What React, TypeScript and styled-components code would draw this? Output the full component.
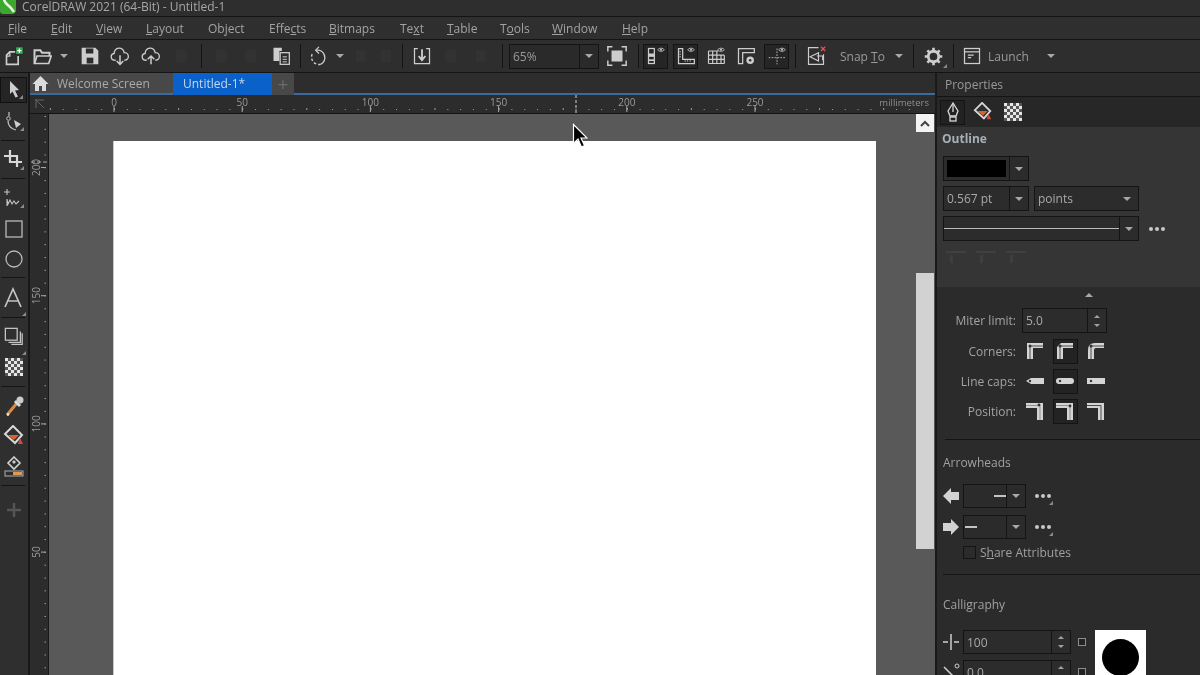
import React from "react";
import styled, { createGlobalStyle } from "styled-components";

const GlobalStyle = createGlobalStyle`
  html, body { margin: 0; padding: 0; background: #2d2d2d; overflow: hidden; }
  * { box-sizing: border-box; }
`;

const Screen = styled.div`
  position: relative;
  width: 1200px;
  height: 675px;
  overflow: hidden;
  display: flex;
  flex-direction: column;
  background: #2d2d2d;
  color: #a9a9a9;
  font-family: "Open Sans", "Noto Sans", sans-serif;
  font-size: 12px;
  filter: blur(0.6px);
`;

const TitleBar = styled.div`
  height: 17px;
  flex: none;
  display: flex;
  align-items: flex-start;
  gap: 6px;
  background: #2e2e2e;
  border-bottom: 1px solid #141414;
`;

const TitleText = styled.span`
  font-size: 12px;
  line-height: 13px;
  color: #a6a6a6;
`;

const MenuBar = styled.div`
  height: 23px;
  flex: none;
  display: flex;
  align-items: center;
  padding-left: 8px;
  background: #2f2f2f;
  border-bottom: 1px solid #141414;
`;

const MenuItem = styled.span<{ $w: number }>`
  width: ${(p) => p.$w}px;
  color: #a3a3a3;
  font-size: 12px;
  white-space: nowrap;
`;

const Toolbar = styled.div`
  height: 33px;
  flex: none;
  display: flex;
  align-items: center;
  background: #2e2e2e;
  border-bottom: 1px solid #141414;
`;

const Tool = styled.div<{ $w?: number; $boxed?: boolean }>`
  position: relative;
  width: ${(p) => p.$w ?? 30}px;
  height: 25px;
  flex: none;
  display: flex;
  align-items: center;
  justify-content: center;
  color: #cdcdcd;
  ${(p) => (p.$boxed ? "border: 1px solid #141414; background: #252525;" : "")}
`;

const Spacer = styled.div<{ $w: number }>`
  width: ${(p) => p.$w}px;
  flex: none;
`;

const ToolSep = styled.div<{ $w: number }>`
  width: ${(p) => p.$w}px;
  height: 24px;
  flex: none;
  display: flex;
  justify-content: center;
  &::before {
    content: "";
    width: 1px;
    background: #141414;
  }
`;

const Caret = styled.div<{ $w?: number }>`
  width: ${(p) => p.$w ?? 16}px;
  flex: none;
  display: flex;
  justify-content: center;
  &::before {
    content: "";
    border-left: 4px solid transparent;
    border-right: 4px solid transparent;
    border-top: 4px solid #a8a8a8;
  }
`;

const CornerTick = styled.span`
  position: absolute;
  right: 1px;
  bottom: 1px;
  border-left: 4px solid transparent;
  border-bottom: 4px solid #8c8c8c;
`;

const ToolLabel = styled.span<{ $w: number }>`
  width: ${(p) => p.$w}px;
  flex: none;
  color: #9a9a9a;
  font-size: 12px;
  white-space: nowrap;
`;

const ZoomCombo = styled.div`
  width: 90px;
  height: 25px;
  flex: none;
  margin-left: 1px;
  display: flex;
  align-items: center;
  border: 1px solid #141414;
  background: #2a2a2a;
  color: #9a9a9a;
  font-size: 12px;
`;

const ComboValue = styled.span`
  flex: 1;
  padding-left: 3px;
`;

const ComboArrow = styled.div<{ $w?: number }>`
  width: ${(p) => p.$w ?? 19}px;
  align-self: stretch;
  flex: none;
  display: flex;
  align-items: center;
  justify-content: center;
  border-left: 1px solid #141414;
  &::before {
    content: "";
    border-left: 4px solid transparent;
    border-right: 4px solid transparent;
    border-top: 4px solid #a8a8a8;
  }
`;

const Main = styled.div`
  flex: 1;
  min-height: 0;
  display: flex;
`;

const Toolbox = styled.div`
  width: 30px;
  flex: none;
  display: flex;
  flex-direction: column;
  align-items: flex-start;
  padding-top: 4px;
  background: #2f2f2f;
  border-right: 2px solid #181818;
`;

const BoxTool = styled.div<{ $h: number; $boxed?: boolean }>`
  position: relative;
  width: 27px;
  height: ${(p) => p.$h}px;
  flex: none;
  display: flex;
  align-items: center;
  justify-content: center;
  color: #b9b9b9;
  ${(p) => (p.$boxed ? "border: 1px solid #111; background: #252525;" : "")}
`;

const BoxSep = styled.div`
  width: 24px;
  height: 1px;
  flex: none;
  margin-left: 1px;
  background: #141414;
`;

const Center = styled.div`
  flex: 1;
  min-width: 0;
  display: flex;
  flex-direction: column;
`;

const TabStrip = styled.div`
  height: 22px;
  flex: none;
  display: flex;
  background: #2d2d2d;
`;

const Tab = styled.div<{ $w: number; $active?: boolean }>`
  width: ${(p) => p.$w}px;
  display: flex;
  align-items: center;
  gap: 8px;
  padding-left: ${(p) => (p.$active ? 10 : 2)}px;
  font-size: 12px;
  background: ${(p) => (p.$active ? "#0a61c9" : "#484848")};
  color: ${(p) => (p.$active ? "#c5d7ee" : "#aaaaaa")};
  border-bottom: 2px solid ${(p) => (p.$active ? "#0a61c9" : "#3d6a9c")};
`;

const AddTab = styled.div`
  width: 22px;
  display: flex;
  align-items: center;
  justify-content: center;
  background: #484848;
  color: #6c6c6c;
  font-size: 19px;
  line-height: 1;
`;

const TabRest = styled.div`
  flex: 1;
  border-bottom: 2px solid #3d6a9c;
`;

const RulerRow = styled.div`
  height: 19px;
  flex: none;
  display: flex;
  background: #2c2c2c;
  border-bottom: 1px solid #141414;
`;

const RulerCorner = styled.div`
  width: 19px;
  flex: none;
  display: flex;
  align-items: center;
  justify-content: center;
  color: #666;
`;

const WorkRow = styled.div`
  flex: 1;
  min-height: 0;
  display: flex;
`;

const VerticalRuler = styled.div`
  width: 19px;
  flex: none;
  background: #2c2c2c;
  border-right: 1px solid #181818;
`;

const Canvas = styled.div`
  flex: 1;
  min-width: 0;
  display: flex;
  background: #595959;
`;

const PageArea = styled.div`
  flex: 1;
  padding: 27px 40px 0 64px;
`;

const Page = styled.div`
  height: 100%;
  background: #ffffff;
  border-left: 1px solid #c8c8c8;
`;

const ScrollBar = styled.div`
  width: 18px;
  flex: none;
  margin-right: 1px;
  display: flex;
  flex-direction: column;
`;

const ScrollUp = styled.div`
  height: 18px;
  display: flex;
  align-items: center;
  justify-content: center;
  background: #f4f4f4;
  color: #444;
`;

const ScrollThumb = styled.div`
  height: 276px;
  margin-top: 141px;
  background: #d2d2d2;
`;

const Panel = styled.div`
  width: 265px;
  flex: none;
  display: flex;
  flex-direction: column;
  background: #2b2b2b;
  border-left: 2px solid #1a1a1a;
  color: #a3a3a3;
  font-size: 12px;
`;

const PanelHeader = styled.div`
  height: 24px;
  flex: none;
  display: flex;
  align-items: center;
  padding-left: 8px;
  border-bottom: 1px solid #141414;
  color: #999;
`;

const PanelTabs = styled.div`
  height: 30px;
  flex: none;
  display: flex;
  align-items: center;
  padding-left: 3px;
  background: #272727;
`;

const PanelTab = styled.div<{ $w: number; $boxed?: boolean }>`
  width: ${(p) => p.$w}px;
  height: 25px;
  flex: none;
  display: flex;
  align-items: center;
  justify-content: center;
  color: #d8d8d8;
  ${(p) => (p.$boxed ? "border: 1px solid #151515; background: #222;" : "")}
`;

const OutlineSection = styled.div`
  height: 160px;
  flex: none;
  display: flex;
  flex-direction: column;
  gap: 5px;
  padding: 3px 0 0 6px;
  background: #353535;
`;

const SectionTitle = styled.div`
  height: 17px;
  margin: 0 0 4px -1px;
  font-weight: 700;
  color: #a6b0b8;
`;

const FieldRow = styled.div`
  display: flex;
  align-items: center;
  gap: 5px;
`;

const Field = styled.div<{ $w: number; $h?: number }>`
  width: ${(p) => p.$w}px;
  height: ${(p) => p.$h ?? 25}px;
  flex: none;
  display: flex;
  align-items: center;
  border: 1px solid #141414;
  background: #2c2c2c;
  color: #a8a8a8;
  font-size: 12px;
`;

const FieldValue = styled.div`
  flex: 1;
  min-width: 0;
  padding-left: 3px;
`;

const Swatch = styled.div`
  flex: 1;
  align-self: stretch;
  margin: 3px;
  background: #000;
`;

const SwatchHolder = styled.div`
  flex: 1;
  align-self: stretch;
  display: flex;
`;

const LinePreview = styled.div`
  flex: 1;
  height: 1px;
  background: #b9b9b9;
`;

const Dots = styled.div<{ $corner?: boolean; $ml: number }>`
  position: relative;
  margin-left: ${(p) => p.$ml}px;
  display: flex;
  &::before {
    content: "";
    width: 4px;
    height: 4px;
    border-radius: 50%;
    background: #c8c8c8;
    box-shadow: 6px 0 0 #c8c8c8, 12px 0 0 #c8c8c8;
  }
  ${(p) =>
    p.$corner
      ? `&::after {
    content: "";
    position: absolute;
    left: 14px;
    top: 7px;
    border-left: 4px solid transparent;
    border-bottom: 4px solid #8a8a8a;
  }`
      : ""}
`;

const GhostRow = styled.div`
  display: flex;
  gap: 10px;
  padding: 5px 0 0 3px;
`;

const Ghost = styled.div`
  width: 20px;
  height: 14px;
  border-top: 2px solid #404040;
  &::after {
    content: "";
    display: block;
    width: 3px;
    height: 8px;
    margin: 2px 0 0 4px;
    background: #3e3e3e;
  }
`;

const StyleBlock = styled.div`
  height: 153px;
  flex: none;
  margin-left: 8px;
  padding-top: 6px;
  border-bottom: 1px solid #141414;
`;

const Triangle = styled.div`
  width: 0;
  margin-left: 140px;
  margin-bottom: 8px;
  border-left: 4px solid transparent;
  border-right: 4px solid transparent;
  border-bottom: 4px solid #a8a8a8;
`;

const PropRow = styled.div<{ $h?: number }>`
  height: ${(p) => p.$h ?? 30}px;
  display: flex;
  align-items: center;
`;

const PropLabel = styled.div`
  width: 71px;
  text-align: right;
  margin-right: 6px;
  color: #a2a2a2;
  white-space: nowrap;
`;

const Choice = styled.div<{ $boxed?: boolean }>`
  width: 25px;
  height: 25px;
  margin-right: 5.5px;
  display: flex;
  align-items: center;
  justify-content: center;
  color: #d2d2d2;
  ${(p) => (p.$boxed ? "border: 1px solid #141414; background: #232323;" : "")}
`;

const Spin = styled.div`
  width: 19px;
  align-self: stretch;
  flex: none;
  display: flex;
  flex-direction: column;
  align-items: center;
  justify-content: center;
  gap: 6px;
  border-left: 1px solid #141414;
  &::before {
    content: "";
    border-left: 3px solid transparent;
    border-right: 3px solid transparent;
    border-bottom: 3px solid #a0a0a0;
  }
  &::after {
    content: "";
    border-left: 3px solid transparent;
    border-right: 3px solid transparent;
    border-top: 3px solid #a0a0a0;
  }
`;

const GroupBlock = styled.div`
  flex: none;
  margin-left: 6px;
  border-bottom: 1px solid #141414;
  padding-top: 14px;
  height: 135px;
`;

const GroupTitle = styled.div`
  height: 17px;
  color: #a0a0a0;
`;

const ArrowRow = styled.div<{ $mt: number }>`
  display: flex;
  align-items: center;
  height: 24px;
  margin-top: ${(p) => p.$mt}px;
  color: #d2d2d2;
`;

const ArrowIcon = styled.div`
  width: 20px;
  flex: none;
  display: flex;
`;

const ArrowField = styled(Field)`
  justify-content: flex-start;
  background: #2b2b2b;
`;

const EndBar = styled.div<{ $right?: boolean }>`
  width: 12px;
  height: 2px;
  margin: ${(p) => (p.$right ? "0 0 0 auto" : "0 auto 0 1px")};
  background: #c4c4c4;
`;

const CheckRow = styled.div`
  display: flex;
  align-items: center;
  gap: 4px;
  margin: 5px 0 0 20px;
  color: #a0a0a0;
`;

const CheckBox = styled.div`
  width: 13px;
  height: 13px;
  border: 1px solid #141414;
  background: #2b2b2b;
`;

const CalligraphyBlock = styled.div`
  margin-left: 6px;
  padding-top: 21px;
`;

const CalligraphyBody = styled.div`
  display: flex;
  margin-top: 17px;
`;

const CalligraphyFields = styled.div`
  display: flex;
  flex-direction: column;
  gap: 6px;
`;

const SmallSquare = styled.div`
  width: 8px;
  height: 8px;
  margin-left: 7px;
  border: 1px solid #8d8d8d;
  background: #222;
`;

const Nib = styled.div`
  width: 51px;
  height: 54px;
  margin-left: 9px;
  display: flex;
  align-items: center;
  justify-content: center;
  background: #fff;
`;

const NibDot = styled.div`
  width: 37px;
  height: 37px;
  border-radius: 50%;
  background: #000;
`;

const MouseCursor = styled.svg`
  position: absolute;
  left: 572px;
  top: 123px;
`;

type IconProps = { size?: number; children: React.ReactNode };

const Icon = ({ size = 20, children }: IconProps) => (
  <svg width={size} height={size} viewBox="0 0 24 24" fill="none" stroke="currentColor" strokeWidth="2">
    {children}
  </svg>
);

const Logo = () => (
  <svg width="16" height="14" viewBox="0 0 16 14">
    <path d="M0 0h16v10q0 4-4 4H3q-3 0-3-3z" fill="#3da82f" />
    <path d="M4 -1C4 3 8 5 11 8l3 4" stroke="#e8f6df" strokeWidth="2.600" fill="none" />
  </svg>
);

const NewIcon = () => (
  <Icon>
    <path d="M15 7H7L3 11v11h14V12" />
    <path d="M7 7v5H3" strokeWidth="1.5" />
    <rect x="14" y="1" width="9" height="9" fill="#35a853" stroke="#222" strokeWidth="1" />
    <path d="M18.500 3v5M16 5.500h5" stroke="#fff" strokeWidth="1.500" />
  </Icon>
);

const OpenIcon = () => (
  <Icon>
    <path d="M3 21V5h7l2 3h9v4" strokeWidth="2.400" />
    <path d="M3 21l3-9h17l-3 9z" />
  </Icon>
);

const SaveIcon = () => (
  <Icon>
    <path d="M3 3h15l3 3v15H3z" fill="currentColor" />
    <rect x="7" y="3" width="9" height="6" fill="#2e2e2e" stroke="none" />
    <rect x="8" y="14" width="8" height="7" fill="#2e2e2e" stroke="none" />
  </Icon>
);

const CloudIcon = ({ up }: { up?: boolean }) => (
  <Icon>
    <path d="M7 17H6a4 4 0 0 1-1-8 6 6 0 0 1 12-1 4.500 4.500 0 0 1 1 9h-1" strokeWidth="1.600" />
    {up ? <path d="M12 22V12m-4 4l4-4 4 4" strokeWidth="1.800" /> : <path d="M12 11v11m-4-4l4 4 4-4" strokeWidth="1.800" />}
  </Icon>
);

const DimIcon = () => (
  <svg width="20" height="20" viewBox="0 0 20 20">
    <rect x="5" y="4" width="10" height="12" fill="#323232" />
  </svg>
);

const PasteIcon = () => (
  <Icon>
    <path d="M3 2h10v4h-3v12H3z" fill="currentColor" stroke="none" />
    <rect x="11" y="8" width="11" height="14" fill="#2e2e2e" strokeWidth="1.500" />
    <path d="M14 13h5M14 16h5M14 19h5" strokeWidth="1.200" />
  </Icon>
);

const UndoIcon = () => (
  <Icon>
    <path d="M9 5a9 9 0 0 1 5 17" strokeWidth="1.700" />
    <path d="M14 22a9 9 0 0 1-11-9 9 9 0 0 1 2-5" strokeWidth="1.700" strokeDasharray="3 2.500" />
    <path d="M12 1L8 5l4 4" strokeWidth="1.500" />
  </Icon>
);

const ImportIcon = () => (
  <Icon>
    <path d="M7 3H3v18h18V3h-4" strokeWidth="1.500" />
    <path d="M12 4v12m-4-4l4 5 4-5" strokeWidth="2.200" />
  </Icon>
);

const FitIcon = () => (
  <Icon size={22}>
    <rect x="6" y="6" width="12" height="12" fill="currentColor" stroke="none" />
    <path d="M2 7V2h5M17 2h5v5M22 17v5h-5M7 22H2v-5" strokeWidth="1.600" />
  </Icon>
);

const EyeMark = () => (
  <>
    <path d="M14 4.500c2-2.500 6-2.500 8 0-2 2.500-6 2.500-8 0z" strokeWidth="1" />
    <circle cx="18" cy="4.500" r="1.200" fill="currentColor" stroke="none" />
  </>
);

const PagesEye = () => (
  <Icon>
    <rect x="3" y="3" width="7" height="18" strokeWidth="1.500" />
    <rect x="3" y="9" width="7" height="4" fill="currentColor" stroke="none" />
    <rect x="3" y="16" width="7" height="2" fill="currentColor" stroke="none" />
    <EyeMark />
  </Icon>
);

const RulerEye = () => (
  <Icon>
    <path d="M3 3h5v13h14v5H3z" strokeWidth="1.500" />
    <path d="M11 17v2M14 17v2M17 17v2M4 7h2M4 10h2M4 13h2" strokeWidth="1" />
    <EyeMark />
  </Icon>
);

const GridEye = () => (
  <Icon>
    <path d="M3 6h12M3 11h19M3 16h19M3 21h19M3 6v15M8 6v15M13 6v15M18 11v10M22 11v10" strokeWidth="1.400" />
    <EyeMark />
  </Icon>
);

const GuideSet = () => (
  <Icon>
    <path d="M3 3h19v5H8v13H3z" strokeWidth="1.500" />
    <circle cx="17" cy="17" r="4.500" fill="currentColor" stroke="none" />
    <circle cx="17" cy="17" r="1.500" fill="#2e2e2e" stroke="none" />
  </Icon>
);

const GuideEye = () => (
  <Icon>
    <path d="M12 3v19M2 14h20" strokeWidth="1" strokeDasharray="2 1.500" />
    <EyeMark />
  </Icon>
);

const SnapOff = () => (
  <Icon>
    <path d="M15 2H3v20h18V10" strokeWidth="1.400" />
    <path d="M15 8l-10 5 10 5z" strokeWidth="1.400" />
    <path d="M13 12h7v5" strokeWidth="1.400" />
    <path d="M18 1l5 5M23 1l-5 5" stroke="#e0524f" strokeWidth="1.600" />
  </Icon>
);

const GearIcon = () => (
  <Icon size={21}>
    <circle cx="12" cy="12" r="6" strokeWidth="3.200" />
    <path d="M12 2v4M12 18v4M2 12h4M18 12h4M5 5l3 3M16 16l3 3M19 5l-3 3M8 16l-3 3" strokeWidth="3" />
  </Icon>
);

const LaunchIcon = () => (
  <Icon>
    <rect x="3" y="3" width="18" height="18" strokeWidth="1.500" />
    <path d="M3 7h18" strokeWidth="1.500" />
    <path d="M7 11h7M7 14h4" strokeWidth="1.500" />
  </Icon>
);

const PickIcon = () => (
  <svg width="20" height="20" viewBox="0 0 20 20">
    <path d="M6 1l9 9-4 .5 3 6-2.500 1-3-6L6 14z" fill="#cfcfcf" />
    <path d="M19 15v4h-4z" fill="#8c8c8c" />
  </svg>
);

const ShapeIcon = () => (
  <svg width="22" height="24" viewBox="0 0 22 24" fill="none" stroke="#c4c4c4">
    <path d="M6 2v4M5 11c0 5 4 8 8 9" strokeWidth="1.200" />
    <circle cx="5.500" cy="8.500" r="1.800" />
    <path d="M11 10l7 4-5 4z" fill="#cfcfcf" stroke="none" />
    <path d="M21 17v4h-4z" fill="#8c8c8c" stroke="none" />
  </svg>
);

const CropIcon = () => (
  <svg width="22" height="22" viewBox="0 0 22 22" fill="none" stroke="#d8d8d8" strokeWidth="2.200">
    <path d="M1 7h13v11M7 1v12h12" />
    <path d="M21 17v4h-4z" fill="#8c8c8c" stroke="none" />
  </svg>
);

const CurveIcon = () => (
  <svg width="22" height="22" viewBox="0 0 22 22" fill="none" stroke="#c4c4c4" strokeWidth="1.100">
    <path d="M4 2v6M1 5h6" />
    <path d="M4 19v-7l1 5 2-4 2 4 2-3 2 3 3-3" />
    <path d="M21 17v4h-4z" fill="#8c8c8c" stroke="none" />
  </svg>
);

const RectIcon = () => (
  <svg width="18" height="18" viewBox="0 0 18 18" fill="none" stroke="currentColor" strokeWidth="1.300">
    <rect x="1" y="1" width="16" height="16" />
  </svg>
);

const EllipseIcon = () => (
  <svg width="18" height="18" viewBox="0 0 18 18" fill="none" stroke="currentColor" strokeWidth="1.300">
    <circle cx="9" cy="9" r="8" />
  </svg>
);

const TextToolIcon = () => (
  <svg width="20" height="22" viewBox="0 0 20 22" fill="none" stroke="#c4c4c4" strokeWidth="1.700">
    <path d="M1 20L9 2l8 18M4.500 14h9" />
  </svg>
);

const ShadowIcon = () => (
  <svg width="20" height="20" viewBox="0 0 22 22" fill="none" stroke="#c4c4c4" strokeWidth="1.400">
    <rect x="1.500" y="1.500" width="13" height="13" />
    <path d="M18 5v12H5M20 7v12H8" />
  </svg>
);

const Checker = ({ size = 18 }: { size?: number }) => {
  const cells = [];
  for (let r = 0; r < 6; r++) {
    for (let c = 0; c < 6; c++) {
      if ((r + c) % 2 === 0) cells.push(<rect key={`${r}-${c}`} x={c * 3} y={r * 3} width="3" height="3" fill="#e6e6e6" />);
    }
  }
  return (
    <svg width={size} height={size} viewBox="0 0 18 18">
      <rect width="18" height="18" fill="#555" />
      {cells}
    </svg>
  );
};

const DropperIcon = () => (
  <svg width="20" height="22" viewBox="0 0 20 22" fill="none">
    <path d="M3 20L13 8" stroke="#d88b45" strokeWidth="3" />
    <path d="M3 20l2-1" stroke="#eee" strokeWidth="2" />
    <path d="M11 6l5 5" stroke="#ddd" strokeWidth="3" />
    <circle cx="16" cy="5" r="3.500" fill="#ccc" />
  </svg>
);

const FillIcon = ({ small }: { small?: boolean }) => (
  <svg width={small ? 20 : 22} height={small ? 20 : 22} viewBox="0 0 22 22">
    <path d="M10 1l9 9-7 8-10-9z" fill="#2e2e2e" stroke="#d8d8d8" strokeWidth="2" />
    <path d="M5 10h11l-5 5z" fill="#d8642b" />
    <path d="M17 13l3 6h-5z" fill="#d24a3c" />
  </svg>
);

const InteractiveIcon = () => (
  <svg width="22" height="22" viewBox="0 0 22 22">
    <path d="M11 1l6 6-6 6-6-6z" fill="#2e2e2e" stroke="#d0d0d0" strokeWidth="1.600" />
    <path d="M9 6l2-2 2 2-2 2z" fill="#c8c8c8" />
    <rect x="2" y="15" width="18" height="5" fill="#2e2e2e" stroke="#b0b0b0" />
    <rect x="10" y="16" width="9" height="3" fill="#e09a50" />
  </svg>
);

const ExtIcon = () => (
  <svg width="14" height="14" viewBox="0 0 14 14" stroke="#555" strokeWidth="2.500">
    <path d="M7 0v14M0 7h14" />
  </svg>
);

const HomeIcon = () => (
  <svg width="17" height="17" viewBox="0 0 17 17">
    <path d="M8.500 1L0.500 9h2.500v7h4v-5h3v5h4V9h2.500z" fill="#dcdcdc" />
  </svg>
);

const CornerMark = () => (
  <svg width="12" height="12" viewBox="0 0 12 12" fill="none" stroke="currentColor">
    <path d="M1 2h9M2 1v9M3 3l7 7" />
  </svg>
);

const UpChevron = () => (
  <svg width="10" height="7" viewBox="0 0 10 7" fill="none" stroke="currentColor" strokeWidth="2">
    <path d="M1 6l4-4 4 4" />
  </svg>
);

const PenIcon = () => (
  <svg width="14" height="20" viewBox="0 0 14 20" fill="none" stroke="#d8d8d8" strokeWidth="1.300">
    <path d="M7 1L2 9l2 5h6l2-5z" />
    <path d="M7 2v8" />
    <rect x="4" y="15" width="6" height="4" />
  </svg>
);

const CornerIcon = ({ kind }: { kind: number }) => {
  const outer = kind === 2 ? "M1 17V8Q1 1 8 1h9v5H9Q7 6 7 8v9z" : kind === 1 ? "M1 17V5L5 1h12v5H7v11z" : "M1 17V1h16v5H7v11z";
  return (
    <svg width="18" height="18" viewBox="0 0 18 18">
      <path d={outer} fill="#d4d4d4" />
      <path d="M4 17V5Q4 4 5 4h12" fill="none" stroke="#2b2b2b" strokeWidth="0.800" />
      <circle cx="4" cy="4" r="1.500" fill="#333" />
    </svg>
  );
};

const CapIcon = ({ kind }: { kind: number }) => (
  <svg width="18" height="8" viewBox="0 0 18 8">
    {kind === 0 && <path d="M0 4L5 1h13v6H5z" fill="#d4d4d4" />}
    {kind === 1 && <rect x="0" y="1" width="18" height="6" fill="#d4d4d4" rx="3" />}
    {kind === 2 && <rect x="0" y="1" width="18" height="6" fill="#d4d4d4" />}
    <circle cx="4" cy="4" r="1.200" fill="#333" />
  </svg>
);

const PositionIcon = ({ kind }: { kind: number }) => (
  <svg width="18" height="18" viewBox="0 0 18 18">
    <path d="M0 1h17v17h-6V6H0z" fill="#d4d4d4" />
    <path d="M0 3.500h14V18" fill="none" stroke="#2b2b2b" strokeWidth={kind === 2 ? 0.800 : 0.400} />
    {kind < 2 && <circle cx={kind === 0 ? 13 : 14} cy={kind === 0 ? 3 : 4} r="1.400" fill="#333" />}
  </svg>
);

const BigArrow = ({ left }: { left?: boolean }) => (
  <svg width="16" height="16" viewBox="0 0 16 16">
    <path d={left ? "M16 4H8V0L0 8l8 8v-4h8z" : "M0 4h8V0l8 8-8 8v-4H0z"} fill="#d2d2d2" />
  </svg>
);

const WidthIcon = () => (
  <svg width="16" height="18" viewBox="0 0 16 18" stroke="#cfcfcf" fill="none">
    <path d="M8 1v16" strokeWidth="1.500" />
    <path d="M0 9h5M11 9h5" strokeWidth="1.500" />
  </svg>
);

const AngleIcon = () => (
  <svg width="18" height="18" viewBox="0 0 18 18" stroke="#cfcfcf" fill="none" strokeWidth="1.500">
    <path d="M1 4l10 10" />
    <circle cx="14" cy="3" r="2" strokeWidth="1" />
  </svg>
);

// mm ticks along the rulers, 5mm = 12.82px
const STEP = 12.82;

const HorizontalRuler = () => {
  const labels = [0, 50, 100, 150, 200, 250];
  const ticks = [];
  for (let i = -6; i < 63; i++) ticks.push(65 + i * STEP);
  return (
    <svg width="886" height="18" viewBox="0 0 886 18">
      {ticks.map((x, i) => (
        <rect key={i} x={x} y={i % 5 === 1 ? 13 : 14} width="1" height={i % 5 === 1 ? 2 : 1} fill="#a0a0a0" />
      ))}
      {labels.map((l) => {
        const x = 65 + l * (STEP / 5);
        return (
          <g key={l}>
            <text x={x} y="10.500" textAnchor="middle" fontSize="10" fontFamily="Open Sans" fill="#9a9a9a">
              {l}
            </text>
            <rect x={x - 0.5} y="11" width="1" height="6" fill="#a8a8a8" />
          </g>
        );
      })}
      <text x="880" y="10.500" textAnchor="end" fontSize="9.500" fontFamily="Open Sans" fill="#8e8e8e">
        millimeters
      </text>
      <path d="M527 0v18" stroke="#cfcfcf" strokeDasharray="3 2" />
    </svg>
  );
};

const VerticalRulerMarks = () => {
  const labels = [200, 150, 100, 50];
  const ticks = [];
  for (let i = 0; i < 46; i++) ticks.push(2 + i * STEP);
  return (
    <svg width="18" height="562" viewBox="0 0 18 562">
      {ticks.map((y, i) => (
        <rect key={i} x="14.500" y={y} width="1.500" height="1" fill="#9a9a9a" />
      ))}
      {labels.map((l, i) => {
        const y = 53.500 + i * STEP * 10;
        return (
          <g key={l}>
            <text
              x="0"
              y="0"
              textAnchor="middle"
              fontSize="10"
              fontFamily="Open Sans"
              fill="#9a9a9a"
              transform={`translate(10 ${y}) rotate(-90)`}
            >
              {l}
            </text>
            <rect x="11" y={y - 0.5} width="5" height="1" fill="#a8a8a8" />
          </g>
        );
      })}
      <path d="M1 48h17" stroke="#a8a8a8" strokeDasharray="4 2" />
    </svg>
  );
};

const App = () => {
  return (
    <>
      <GlobalStyle />
      <Screen>
        <TitleBar>
          <Logo />
          <TitleText>CorelDRAW 2021 (64-Bit) - Untitled-1</TitleText>
        </TitleBar>

        <MenuBar>
          <MenuItem $w={43}><u>F</u>ile</MenuItem>
          <MenuItem $w={45}><u>E</u>dit</MenuItem>
          <MenuItem $w={50}><u>V</u>iew</MenuItem>
          <MenuItem $w={62}><u>L</u>ayout</MenuItem>
          <MenuItem $w={61}>Ob<u>j</u>ect</MenuItem>
          <MenuItem $w={60}>Effe<u>c</u>ts</MenuItem>
          <MenuItem $w={71}><u>B</u>itmaps</MenuItem>
          <MenuItem $w={47}>Te<u>x</u>t</MenuItem>
          <MenuItem $w={53}><u>T</u>able</MenuItem>
          <MenuItem $w={52}>T<u>o</u>ols</MenuItem>
          <MenuItem $w={70}><u>W</u>indow</MenuItem>
          <MenuItem $w={40}><u>H</u>elp</MenuItem>
        </MenuBar>

        <Toolbar>
          <Tool $w={28}><NewIcon /></Tool>
          <Tool $w={28}><OpenIcon /></Tool>
          <Caret />
          <Spacer $w={3} />
          <Tool><SaveIcon /></Tool>
          <Tool><CloudIcon /></Tool>
          <Tool $w={31}><CloudIcon up /></Tool>
          <Tool><DimIcon /></Tool>
          <ToolSep $w={10} />
          <Tool><DimIcon /></Tool>
          <Tool><DimIcon /></Tool>
          <Tool><PasteIcon /></Tool>
          <ToolSep $w={8} />
          <Tool><UndoIcon /></Tool>
          <Caret $w={12} />
          <Tool><DimIcon /></Tool>
          <Tool $w={20}><DimIcon /></Tool>
          <ToolSep $w={12} />
          <Tool $w={28}><ImportIcon /></Tool>
          <Tool><DimIcon /></Tool>
          <Tool><DimIcon /></Tool>
          <ToolSep $w={12} />
          <ZoomCombo>
            <ComboValue>65%</ComboValue>
            <ComboArrow />
          </ZoomCombo>
          <Tool $w={35}><FitIcon /></Tool>
          <ToolSep $w={9} />
          <Tool $w={25} $boxed><PagesEye /></Tool>
          <Spacer $w={5} />
          <Tool $w={25} $boxed><RulerEye /></Tool>
          <Spacer $w={3} />
          <Tool><GridEye /></Tool>
          <Tool><GuideSet /></Tool>
          <Spacer $w={3} />
          <Tool $w={25} $boxed><GuideEye /></Tool>
          <ToolSep $w={13} />
          <Tool $w={28}><SnapOff /></Tool>
          <Spacer $w={10} />
          <ToolLabel $w={50}>Snap <u>T</u>o</ToolLabel>
          <Caret $w={18} />
          <ToolSep $w={10} />
          <Tool $w={30}><GearIcon /><CornerTick /></Tool>
          <ToolSep $w={10} />
          <Tool $w={28}><LaunchIcon /></Tool>
          <Spacer $w={2} />
          <ToolLabel $w={55}>Launch</ToolLabel>
          <Caret $w={16} />
        </Toolbar>

        <Main>
          <Toolbox>
            <BoxTool $h={26} $boxed><PickIcon /></BoxTool>
            <BoxTool $h={37}><ShapeIcon /></BoxTool>
            <BoxSep />
            <BoxTool $h={37}><CropIcon /></BoxTool>
            <BoxSep />
            <BoxTool $h={38}><CurveIcon /></BoxTool>
            <BoxTool $h={23}><RectIcon /></BoxTool>
            <BoxTool $h={37}><EllipseIcon /></BoxTool>
            <BoxSep />
            <BoxTool $h={39}><TextToolIcon /><CornerTick /></BoxTool>
            <BoxSep />
            <BoxTool $h={38}><ShadowIcon /><CornerTick /></BoxTool>
            <BoxTool $h={22}><Checker /></BoxTool>
            <BoxTool $h={8} />
            <BoxSep />
            <BoxTool $h={37}><DropperIcon /></BoxTool>
            <BoxTool $h={24}><FillIcon /></BoxTool>
            <BoxTool $h={37}><InteractiveIcon /></BoxTool>
            <BoxSep />
            <BoxTool $h={48}><ExtIcon /></BoxTool>
          </Toolbox>

          <Center>
            <TabStrip>
              <Tab $w={143}><HomeIcon />Welcome Screen</Tab>
              <Tab $w={99} $active>Untitled-1*</Tab>
              <AddTab>+</AddTab>
              <TabRest />
            </TabStrip>
            <RulerRow>
              <RulerCorner><CornerMark /></RulerCorner>
              <HorizontalRuler />
            </RulerRow>
            <WorkRow>
              <VerticalRuler><VerticalRulerMarks /></VerticalRuler>
              <Canvas>
                <PageArea><Page /></PageArea>
                <ScrollBar>
                  <ScrollUp><UpChevron /></ScrollUp>
                  <ScrollThumb />
                </ScrollBar>
              </Canvas>
            </WorkRow>
          </Center>

          <Panel>
            <PanelHeader>Properties</PanelHeader>
            <PanelTabs>
              <PanelTab $w={25} $boxed><PenIcon /></PanelTab>
              <Spacer $w={5} />
              <PanelTab $w={26}><FillIcon small /></PanelTab>
              <Spacer $w={4} />
              <PanelTab $w={26}><Checker /></PanelTab>
            </PanelTabs>

            <OutlineSection>
              <SectionTitle>Outline</SectionTitle>
              <FieldRow>
                <Field $w={86}>
                  <SwatchHolder><Swatch /></SwatchHolder>
                  <ComboArrow />
                </Field>
              </FieldRow>
              <FieldRow>
                <Field $w={86}>
                  <FieldValue>0.567 pt</FieldValue>
                  <ComboArrow />
                </Field>
                <Field $w={105}>
                  <FieldValue>points</FieldValue>
                  <Caret $w={22} />
                </Field>
              </FieldRow>
              <FieldRow>
                <Field $w={196}>
                  <LinePreview />
                  <ComboArrow />
                </Field>
                <Dots $ml={5} />
              </FieldRow>
              <GhostRow>
                <Ghost />
                <Ghost />
                <Ghost />
              </GhostRow>
            </OutlineSection>

            <StyleBlock>
              <Triangle />
              <PropRow $h={31}>
                <PropLabel>Miter limit:</PropLabel>
                <Field $w={85}>
                  <FieldValue>5.0</FieldValue>
                  <Spin />
                </Field>
              </PropRow>
              <PropRow>
                <PropLabel>Corners:</PropLabel>
                <Choice><CornerIcon kind={0} /></Choice>
                <Choice $boxed><CornerIcon kind={1} /></Choice>
                <Choice><CornerIcon kind={2} /></Choice>
              </PropRow>
              <PropRow>
                <PropLabel>Line caps:</PropLabel>
                <Choice><CapIcon kind={0} /></Choice>
                <Choice $boxed><CapIcon kind={1} /></Choice>
                <Choice><CapIcon kind={2} /></Choice>
              </PropRow>
              <PropRow>
                <PropLabel>Position:</PropLabel>
                <Choice><PositionIcon kind={0} /></Choice>
                <Choice $boxed><PositionIcon kind={1} /></Choice>
                <Choice><PositionIcon kind={2} /></Choice>
              </PropRow>
            </StyleBlock>

            <GroupBlock>
              <GroupTitle>Arrowheads</GroupTitle>
              <ArrowRow $mt={13}>
                <ArrowIcon><BigArrow left /></ArrowIcon>
                <ArrowField $w={63} $h={24}>
                  <EndBar $right />
                  <ComboArrow />
                </ArrowField>
                <Dots $ml={9} $corner />
              </ArrowRow>
              <ArrowRow $mt={7}>
                <ArrowIcon><BigArrow /></ArrowIcon>
                <ArrowField $w={63} $h={24}>
                  <EndBar />
                  <ComboArrow />
                </ArrowField>
                <Dots $ml={9} $corner />
              </ArrowRow>
              <CheckRow>
                <CheckBox />
                <span>S<u>h</u>are Attributes</span>
              </CheckRow>
            </GroupBlock>

            <CalligraphyBlock>
              <GroupTitle>Calligraphy</GroupTitle>
              <CalligraphyBody>
                <CalligraphyFields>
                  <ArrowRow $mt={0}>
                    <ArrowIcon><WidthIcon /></ArrowIcon>
                    <Field $w={108} $h={24}>
                      <FieldValue>100</FieldValue>
                      <Spin />
                    </Field>
                    <SmallSquare />
                  </ArrowRow>
                  <ArrowRow $mt={0}>
                    <ArrowIcon><AngleIcon /></ArrowIcon>
                    <Field $w={108} $h={24}>
                      <FieldValue>0.0</FieldValue>
                      <Spin />
                    </Field>
                    <SmallSquare />
                  </ArrowRow>
                </CalligraphyFields>
                <Nib><NibDot /></Nib>
              </CalligraphyBody>
            </CalligraphyBlock>
          </Panel>
        </Main>

        <MouseCursor width="16" height="26" viewBox="0 0 16 26">
          <path d="M1.500 1.500v19l4.500-4.500 3.500 8 3-1.500-3.500-7.500h6z" fill="#000" stroke="#fff" strokeWidth="1.200" />
        </MouseCursor>
      </Screen>
    </>
  );
};

export default App;
